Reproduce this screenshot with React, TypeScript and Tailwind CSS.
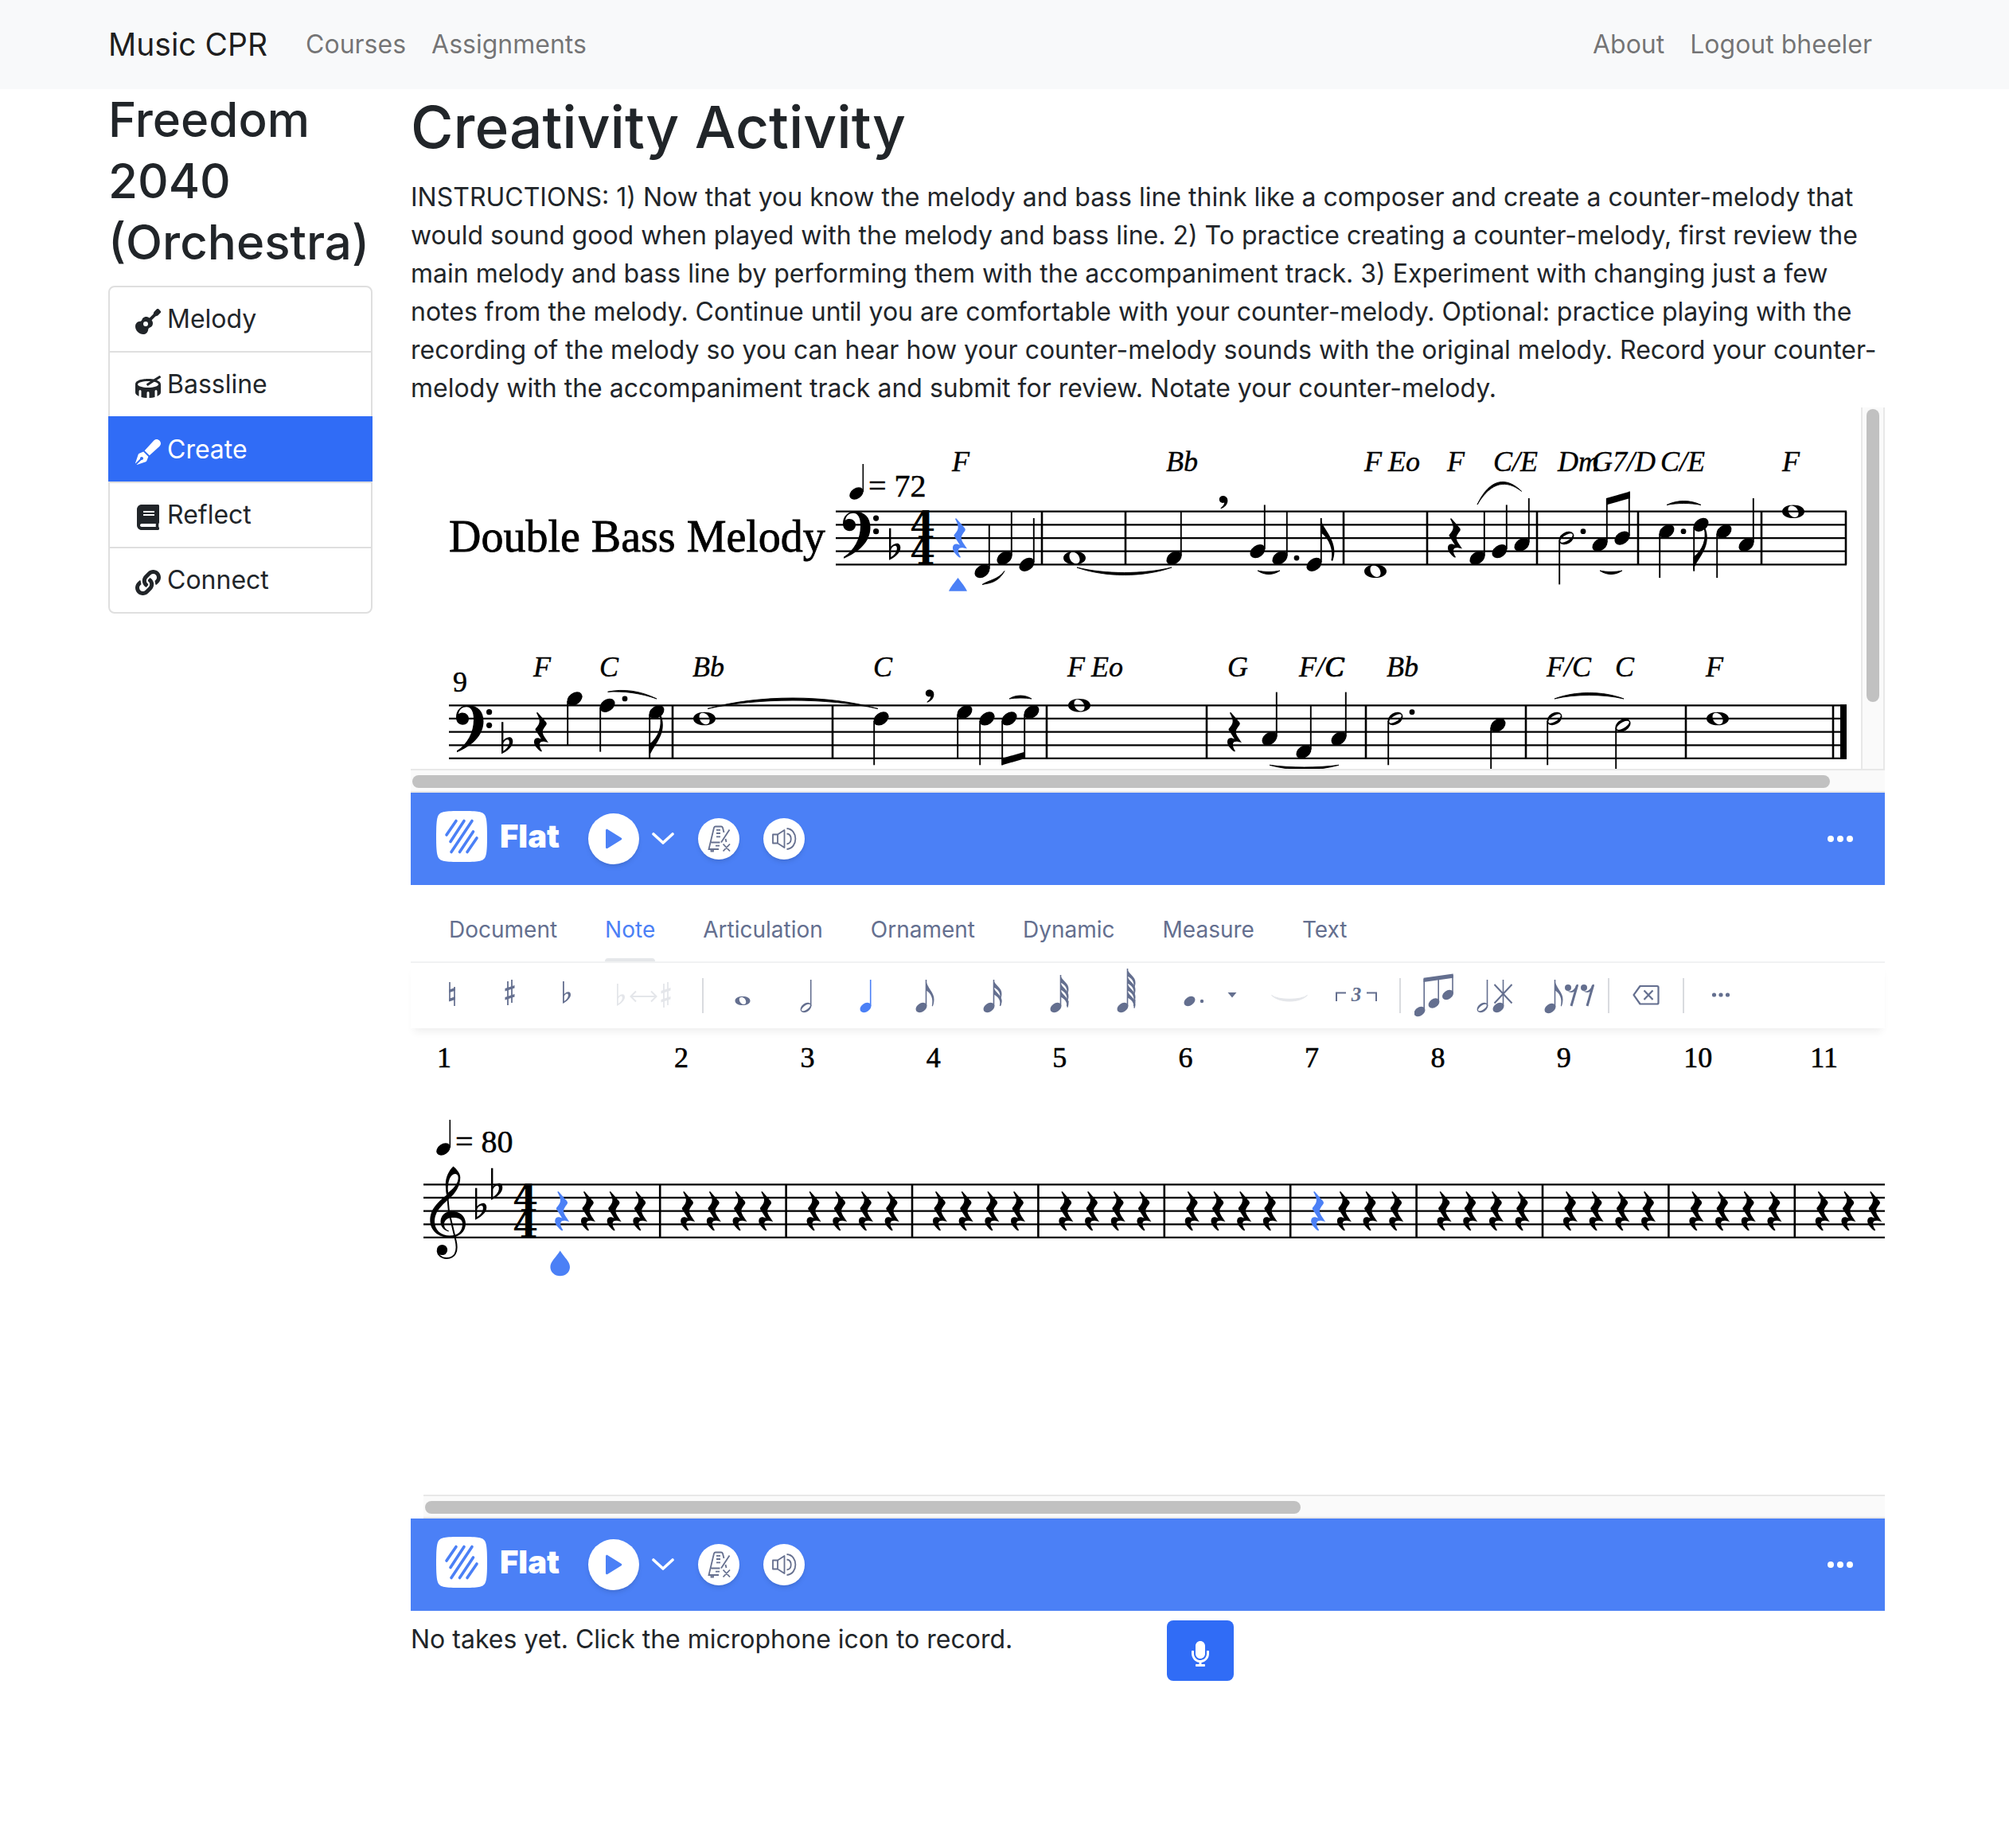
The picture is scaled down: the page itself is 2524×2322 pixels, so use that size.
import React from "react";
import { FaBook, FaDrum, FaGuitar, FaLink, FaMicrophone, FaPenFancy } from "react-icons/fa";

const INK = "#000000";
const BLUE = "#4b80f6";
const SPACE = 50 / 3;
const HALF = SPACE / 2;

/* ---------- notation primitives ---------- */

type At = { x: number; y: number };

function Staff({ x1, x2, top }: { x1: number; x2: number; top: number }) {
  return (
    <g stroke={INK} strokeWidth={2.3}>
      {[0, 1, 2, 3, 4].map((i) => (
        <line key={i} x1={x1} x2={x2} y1={top + i * SPACE} y2={top + i * SPACE} />
      ))}
    </g>
  );
}

function Bars({ xs, top }: { xs: number[]; top: number }) {
  return (
    <g stroke={INK} strokeWidth={2.6}>
      {xs.map((x) => (
        <line key={x} x1={x} x2={x} y1={top} y2={top + 4 * SPACE} />
      ))}
    </g>
  );
}

const BASS =
  "M1 57C14 49 22 34 22 18C22 8 19 2 13 2C8 2 4 5 3 11C5 9.5 7 9.3 8 9.3C12.5 9.3 16 12.5 16 17C16 21.5 12.5 24.5 8.5 24.5C3.5 24.5 0 21 0 15C0 6 6 0 15 0C27 0 34.5 7 34.5 20C34.5 38 20 51 1 59Z";

function BassClef({ x, y }: At) {
  return (
    <g transform={`translate(${x} ${y})`} fill={INK}>
      <path d={BASS} />
      <circle cx={41.6} cy={8.4} r={3.6} />
      <circle cx={41.6} cy={25} r={3.6} />
    </g>
  );
}

function TrebleClef({ x, y }: At) {
  return (
    <g transform={`translate(${x} ${y})`} fill={INK}>
      <path
        fillRule="evenodd"
        d="M29.5 0C24 5 19.5 14 19.8 24C20 28 20.3 32 21 36C9 46 0.3 54 0.3 68C0.3 80 10 89.5 25 89.5C37 89.5 45 82 45 72C45 63 38 56.5 27.5 56.5C19 56.5 13.5 62 13.5 70C13.5 76 18 80.5 23.5 82L24 81C21 80 18 77.5 18 73C18 67 23 64.5 29 64.5C35 64.5 41 66 41 72C41 81 36 87 25 87C14 87 6 80 6 69C6 58 14 49.5 24 41C32 34 38.3 25 38.3 14C38.3 8 33 3 29.5 0ZM23 33C22 25 23.5 10 32 9.5C36.5 9.5 36.5 16 34 21C31.5 26 27 30 23 33Z"
      />
      <path
        d="M21.5 30L24 57L32.5 93C36 108 31 115.5 21 115.5C14 115.5 10 111 9.5 106"
        fill="none"
        stroke={INK}
        strokeWidth={2}
      />
      <circle cx={15.5} cy={105} r={6.6} />
    </g>
  );
}

const FLAT =
  "M0 -29h2.4L2.4 -6C5 -9 8 -10 10 -10C13 -10 14.3 -7.5 14.3 -4.5C14.3 2 7 8 0 11ZM2.4 -2.5C4 -6 6 -7 7.5 -7C9.6 -7 10.2 -5 9.7 -2C9 2 6 5 2.3 7.4Z";

function Flat({ x, y }: At) {
  return <path transform={`translate(${x} ${y})`} fillRule="evenodd" d={FLAT} fill={INK} />;
}

function Time({ x, top }: { x: number; top: number }) {
  return (
    <text
      fill={INK}
      fontFamily="'DejaVu Serif', serif"
      fontWeight={700}
      fontSize={46}
      textAnchor="middle"
    >
      <tspan x={x} y={top + 2 * SPACE}>
        4
      </tspan>
      <tspan x={x} y={top + 4 * SPACE}>
        4
      </tspan>
    </text>
  );
}

function Rest({ x, top, color = INK }: { x: number; top: number; color?: string }) {
  return (
    <path
      transform={`translate(${x} ${top + 2 * SPACE})`}
      fill={color}
      d="M-6 -24C-5.5 -25 -4.5 -25 -4 -24L6 -12.5C7 -11 7 -10 6 -8.5C1 -2 0.5 0 4 6L9 13.5C4 12 -1 11 -2 15C-2.5 18 -1 21 1 24C0 25 -1 24.5 -2 23.5C-6 20 -9.5 16 -9 11.5C-8.5 7 -4 6.5 0 9L-7 -2C-7.8 -3.2 -7.5 -4 -6.5 -5C-1 -11 -1 -15 -6 -24Z"
    />
  );
}

function Whole({ x, y }: At) {
  return (
    <path
      transform={`translate(${x} ${y})`}
      fillRule="evenodd"
      fill={INK}
      d="M-14 0C-14 -5 -8 -8.3 0 -8.3C8 -8.3 14 -5 14 0C14 5 8 8.3 0 8.3C-8 8.3 -14 5 -14 0ZM-6.5 -2.5C-6.5 3 -2 7.2 2 7.2C5 7.2 6.8 5 6.5 1.5C6 -3.5 2 -7.2 -2 -7.2C-5 -7.2 -6.5 -5.5 -6.5 -2.5Z"
    />
  );
}

type Stem = "up" | "down";

interface NoteSpec {
  x: number;
  s: number;
  stem?: Stem;
  kind?: "quarter" | "half" | "eighth" | "whole";
  dot?: number;
  len?: number;
}

function Note({ x, s, stem = "up", kind = "quarter", dot, len = 7, top }: NoteSpec & { top: number }) {
  const y = top + s * HALF;
  const dotY = s % 2 === 0 ? y - HALF : y;
  if (kind === "whole") return <Whole x={x} y={y} />;
  const sx = stem === "up" ? x + 8.8 : x - 8.8;
  const end = stem === "up" ? y - len * HALF : y + len * HALF;
  return (
    <g fill={INK}>
      {kind === "half" ? (
        <g transform={`translate(${x} ${y}) rotate(-32)`}>
          <path
            fillRule="evenodd"
            d="M-10.3 0A10.3 7.2 0 1 1 10.3 0A10.3 7.2 0 1 1 -10.3 0ZM-8.8 0.6A8.8 3.6 0 1 0 8.8 -0.6A8.8 3.6 0 1 0 -8.8 0.6Z"
          />
        </g>
      ) : (
        <ellipse cx={x} cy={y} rx={10.5} ry={7.4} transform={`rotate(-36 ${x} ${y})`} />
      )}
      <line x1={sx} x2={sx} y1={y + (stem === "up" ? -3 : 3)} y2={end} stroke={INK} strokeWidth={1.9} />
      {kind === "eighth" && (
        <path
          transform={`translate(${sx - 0.9} ${end}) scale(1 ${stem === "up" ? 1 : -1})`}
          d="M0 0C2 12 17.5 24 17.5 42C17.5 47 16.5 51 15.2 54L13.5 53C16.5 42 12 26 0 18Z"
        />
      )}
      {dot !== undefined && <circle cx={dot} cy={dotY} r={3.4} />}
    </g>
  );
}

function Slur({ a, b, apex }: { a: [number, number]; b: [number, number]; apex: number }) {
  const mid = (a[1] + b[1]) / 2;
  const dir = apex > mid ? 1 : -1;
  const cOut = mid + (apex - mid) * 1.33;
  const cIn = cOut - dir * 4;
  const q = (b[0] - a[0]) * 0.3;
  return (
    <path
      fill={INK}
      stroke={INK}
      strokeWidth={0.9}
      d={`M${a[0]} ${a[1]}C${a[0] + q} ${cOut} ${b[0] - q} ${cOut} ${b[0]} ${b[1]}C${b[0] - q} ${cIn} ${a[0] + q} ${cIn} ${a[0]} ${a[1]}Z`}
    />
  );
}

function Breath({ x, y }: At) {
  return (
    <path
      transform={`translate(${x} ${y})`}
      fill={INK}
      d="M-5.2 -3.5C-5.2 -6.4 -3 -8 -0.5 -8C3 -8 5.4 -5.6 5.4 -2C5.4 3 1.5 6.6 -3 8.3L-3.6 7.4C-1 5.6 1 3.4 1.2 0.6C-2.5 1.8 -5.2 -0.5 -5.2 -3.5Z"
    />
  );
}

function Chords({ list, y }: { list: [number, string][]; y: number }) {
  return (
    <g
      fill={INK}
      stroke={INK}
      strokeWidth={0.4}
      fontFamily="'Liberation Serif', serif"
      fontStyle="italic"
      fontSize={36}
    >
      {list.map(([x, t]) => (
        <text key={`${x}${t}`} x={x} y={y}>
          {t}
        </text>
      ))}
    </g>
  );
}

function Tempo({ x, y, bpm }: At & { bpm: number }) {
  return (
    <g fill={INK}>
      <ellipse cx={x} cy={y} rx={9.6} ry={6.6} transform={`rotate(-34 ${x} ${y})`} />
      <line x1={x + 8.3} x2={x + 8.3} y1={y - 2} y2={y - 37} stroke={INK} strokeWidth={1.6} />
      <text
        x={x + 15}
        y={y + 4}
        fontFamily="'Liberation Serif', serif"
        fontSize={40}
        stroke={INK}
        strokeWidth={0.5}
      >
        = {bpm}
      </text>
    </g>
  );
}

/* ---------- scores ---------- */

const T1 = 642.7;
const T2 = 886.3;
const T3 = 1488.3;

const LINE_ONE: NoteSpec[] = [
  { x: 1234, s: 9 },
  { x: 1262, s: 7 },
  { x: 1290, s: 8 },
  { x: 1350, s: 7, kind: "whole" },
  { x: 1475, s: 7 },
  { x: 1580, s: 6 },
  { x: 1608, s: 7, dot: 1629 },
  { x: 1651, s: 8, kind: "eighth" },
  { x: 1728, s: 9, kind: "whole" },
  { x: 1856, s: 7 },
  { x: 1884, s: 6 },
  { x: 1912, s: 5 },
  { x: 1968, s: 4, kind: "half", stem: "down", dot: 1989 },
  { x: 2010, s: 5 },
  { x: 2038, s: 4 },
  { x: 2094, s: 3, stem: "down", dot: 2115 },
  { x: 2137, s: 2, stem: "down", kind: "eighth" },
  { x: 2166, s: 3, stem: "down" },
  { x: 2194, s: 5 },
  { x: 2253, s: 0, kind: "whole" },
];

const LINE_TWO: NoteSpec[] = [
  { x: 722, s: -1, stem: "down" },
  { x: 763, s: 0, stem: "down", dot: 785 },
  { x: 825, s: 1, stem: "down", kind: "eighth" },
  { x: 885, s: 2, kind: "whole" },
  { x: 1107, s: 2, stem: "down" },
  { x: 1212, s: 1, stem: "down" },
  { x: 1240, s: 2, stem: "down" },
  { x: 1268, s: 2, stem: "down" },
  { x: 1296, s: 1, stem: "down" },
  { x: 1356, s: 0, kind: "whole" },
  { x: 1595, s: 5 },
  { x: 1638, s: 7 },
  { x: 1682, s: 5 },
  { x: 1753, s: 2, kind: "half", stem: "down", dot: 1774 },
  { x: 1882, s: 3, stem: "down" },
  { x: 1953, s: 2, kind: "half", stem: "down" },
  { x: 2039, s: 3, kind: "half", stem: "down" },
  { x: 2158, s: 2, kind: "whole" },
];

function MelodyScore() {
  return (
    <svg
      viewBox="516 512 1822 454"
      preserveAspectRatio="xMinYMin slice"
      className="block h-[454px] w-full"
      role="img"
      aria-label="Double Bass Melody score"
    >
      <text
        x={564}
        y={693}
        fontFamily="'Liberation Serif', serif"
        fontSize={56}
        fill={INK}
        stroke={INK}
        strokeWidth={0.8}
      >
        Double Bass Melody
      </text>
      <Tempo x={1076} y={620} bpm={72} />
      <Chords
        y={592}
        list={[
          [1196, "F"],
          [1465, "Bb"],
          [1714, "F"],
          [1744, "Eo"],
          [1818, "F"],
          [1876, "C/E"],
          [1957, "Dm"],
          [2000, "G7/D"],
          [2086, "C/E"],
          [2239, "F"],
        ]}
      />
      <Staff x1={1050} x2={2320} top={T1} />
      <Bars xs={[1309, 1414, 1688, 1793, 1931, 2058, 2213, 2319]} top={T1} />
      <BassClef x={1059} y={T1} />
      <Flat x={1117} y={T1 + 6 * HALF} />
      <Time x={1159} top={T1} />
      <Rest x={1206} top={T1} color={BLUE} />
      <path d="M1203.5 726C1208 732 1213 738 1215 742.7H1192C1194 738 1199 732 1203.5 726Z" fill={BLUE} />
      <Rest x={1828} top={T1} />
      {LINE_ONE.map((n) => (
        <Note key={n.x} {...n} top={T1} />
      ))}
      <path d="M2018 626L2048 617.5V626L2018 634.5Z" fill={INK} />
      <Breath x={1537} y={631} />
      <Slur a={[1234, 734.5]} b={[1262, 717.5]} apex={731} />
      <Slur a={[1353, 713]} b={[1472, 713]} apex={722.5} />
      <Slur a={[1580, 717]} b={[1608, 717]} apex={721.5} />
      <path
        d="M1856 634C1872 600 1893 599 1911.6 617.3C1893 603 1874 604 1856 634Z"
        fill={INK}
        stroke={INK}
        strokeWidth={0.9}
      />
      <Slur a={[2010, 717]} b={[2038, 717]} apex={721.5} />
      <Slur a={[2094, 634.5]} b={[2137, 634.5]} apex={629.5} />

      <text x={569} y={869} fontFamily="'Liberation Serif', serif" fontSize={36} fill={INK} stroke={INK} strokeWidth={0.5}>
        9
      </text>
      <Chords
        y={850}
        list={[
          [670, "F"],
          [753, "C"],
          [870, "Bb"],
          [1097, "C"],
          [1341, "F"],
          [1371, "Eo"],
          [1542, "G"],
          [1632, "F/C"],
          [1665, "C"],
          [1742, "Bb"],
          [1943, "F/C"],
          [2029, "C"],
          [2143, "F"],
        ]}
      />
      <Staff x1={564} x2={2320} top={T2} />
      <Bars xs={[845, 1046, 1315, 1516, 1716, 1917, 2118, 2303]} top={T2} />
      <rect x={2312} y={T2 - 1} width={8} height={4 * SPACE + 2} fill={INK} />
      <BassClef x={573} y={T2} />
      <Flat x={630} y={T2 + 6 * HALF} />
      <Rest x={680} top={T2} />
      <Rest x={1551} top={T2} />
      {LINE_TWO.map((n) => (
        <Note key={n.x} {...n} top={T2} />
      ))}
      <path d="M1258.5 953L1288 944.5V953L1258.5 961.5Z" fill={INK} />
      <Breath x={1168} y={874.5} />
      <path
        d="M763.6 869.3C783 865 805 868 825 878C805 871 783 868 763.6 869.3Z"
        fill={INK}
        stroke={INK}
        strokeWidth={0.9}
      />
      <Slur a={[889, 890.5]} b={[1103, 890.5]} apex={877} />
      <Slur a={[1268, 878]} b={[1296, 878]} apex={874} />
      <Slur a={[1595, 961.3]} b={[1682, 961.3]} apex={967} />
      <Slur a={[1953, 878]} b={[2040, 878]} apex={870.5} />
    </svg>
  );
}

function EditorScore() {
  const bars = Array.from({ length: 10 }, (_, i) => 829.2 + i * 158.4);
  const starts = [671.3, ...bars];
  return (
    <svg
      viewBox="532 1292 1836 586"
      preserveAspectRatio="xMinYMin slice"
      className="block h-[586px] w-full"
      role="img"
      aria-label="Counter-melody score"
    >
      <g
        fontFamily="'Liberation Serif', serif"
        fontSize={36}
        fill={INK}
        stroke={INK}
        strokeWidth={0.6}
        textAnchor="middle"
      >
        {starts.map((_, i) => (
          <text key={i} x={i === 0 ? 558 : 856 + (i - 1) * 158.4 + (i > 8 ? 10 : 0)} y={1341}>
            {i + 1}
          </text>
        ))}
      </g>
      <Tempo x={557} y={1444} bpm={80} />
      <Staff x1={532} x2={2400} top={T3} />
      <Bars xs={bars} top={T3} />
      <TrebleClef x={540} y={1465.5} />
      <Flat x={597} y={T3 + 4 * HALF} />
      <Flat x={617} y={T3 + HALF} />
      <Time x={660} top={T3} />
      {starts.map((x, m) =>
        [0, 1, 2, 3].map((b) => (
          <Rest
            key={`${m}-${b}`}
            x={x + 35 + b * 32.7}
            top={T3}
            color={b === 0 && (m === 0 || m === 6) ? BLUE : INK}
          />
        ))
      )}
      <path
        d="M703.7 1571.5C709 1580 716 1585 716 1592C716 1598.5 710.5 1603.3 703.7 1603.3C697 1603.3 691.4 1598.5 691.4 1592C691.4 1585 698.500 1580 703.7 1571.5Z"
        fill={BLUE}
      />
    </svg>
  );
}

/* ---------- player bar ---------- */

function PlayerBar() {
  return (
    <div className="flex h-[116px] items-center bg-[#4b80f6] pr-10 pl-8 text-white">
      <a href="#flat" className="flex items-center gap-4 pb-1.5">
        <svg width={64} height={64} viewBox="0 0 64 64" aria-hidden="true">
          <path
            d="M32 0C54 0 58 1 61 5C63 8 64 14 64 32C64 50 63 56 61 59C58 63 54 64 32 64C10 64 6 63 3 59C1 56 0 50 0 32C0 14 1 8 3 5C6 1 10 0 32 0Z"
            fill="#fff"
          />
          <path
            d="M25 12.5L13 30M35 12.5L18 38.5M45 12.5L19 51.5M46.5 26L29.5 51.5M51 34L39 51.5"
            stroke={BLUE}
            strokeWidth={3.6}
            strokeLinecap="round"
          />
        </svg>
        <span className="font-['Inter',sans-serif] text-[40px] leading-none font-black">Flat</span>
      </a>
      <button
        type="button"
        aria-label="Play"
        className="ml-9 grid size-16 place-items-center rounded-full bg-white shadow-md"
      >
        <svg width={64} height={64} viewBox="0 0 64 64" aria-hidden="true">
          <path d="M22 21.5C22 19.8 23.4 19.3 24.6 20.2L41.5 30.8C42.5 31.5 42.5 32.5 41.5 33.2L24.6 43.8C23.4 44.7 22 44.2 22 42.5Z" fill={BLUE} />
        </svg>
      </button>
      <button type="button" aria-label="Playback options" className="ml-4">
        <svg width={28} height={16} viewBox="0 0 28 16" fill="none" aria-hidden="true">
          <path d="M2 2L14 13L26 2" stroke="#fff" strokeWidth={3.6} strokeLinecap="round" strokeLinejoin="round" />
        </svg>
      </button>
      <button
        type="button"
        aria-label="Metronome"
        className="ml-[30px] size-[52px] rounded-full bg-white shadow-md"
      >
        <svg width={52} height={52} viewBox="0 0 52 52" fill="none" stroke="#66708f" strokeWidth={1.8} aria-hidden="true">
          <path d="M26 39H13.5L20 12Q20.5 10.5 22 10.5H29Q30.5 10.5 31 12L32.5 18M34.5 26L35.5 30M16.5 30.5H27.5M39.5 14.5L29 30.5M23 14.8H28M23 19H28M23 23.3H28M22 34.7H27M16.5 39V41.5H19V39M31.5 32.5L40 41.5M40 32.5L31.5 41.5" />
        </svg>
      </button>
      <button
        type="button"
        aria-label="Volume"
        className="ml-[30px] size-[52px] rounded-full bg-white shadow-md"
      >
        <svg width={52} height={52} viewBox="0 0 52 52" fill="none" stroke="#66708f" strokeWidth={1.8} aria-hidden="true">
          <path
            strokeLinejoin="round"
            d="M12 20.5H18V31.5H12ZM18 20.5L26.5 15V37L18 31.5M29.5 19.5C36.5 20.5 36.5 31.5 29.5 32.5M29.5 13C44 14 44 38 29.5 39"
          />
        </svg>
      </button>
      <button type="button" aria-label="More" className="ml-auto">
        <svg width={32} height={10} viewBox="0 0 32 10" fill="#fff" aria-hidden="true">
          <circle cx={4} cy={5} r={4} />
          <circle cx={16} cy={5} r={4} />
          <circle cx={28} cy={5} r={4} />
        </svg>
      </button>
    </div>
  );
}

/* ---------- toolbar icons, drawn on an 82px tall row ---------- */

function Glyph({ w, children }: { w: number; children: React.ReactNode }) {
  return (
    <svg width={w} height={82} viewBox={`0 0 ${w} 82`} fill="currentColor" aria-hidden="true">
      {children}
    </svg>
  );
}

function SmallHead({ x, y, hollow = false }: At & { hollow?: boolean }) {
  return (
    <g transform={`translate(${x} ${y}) rotate(-36)`}>
      {hollow ? (
        <path
          fillRule="evenodd"
          d="M-7.6 0A7.6 5.2 0 1 1 7.6 0A7.6 5.2 0 1 1 -7.6 0ZM-6.4 0.4A6.4 2.6 0 1 0 6.4 -0.4A6.4 2.6 0 1 0 -6.4 0.4Z"
        />
      ) : (
        <ellipse rx={7.6} ry={5.4} />
      )}
    </g>
  );
}

function SmallStem({ x, y1, y2 }: { x: number; y1: number; y2: number }) {
  return <line x1={x} x2={x} y1={y1} y2={y2} stroke="currentColor" strokeWidth={1.6} />;
}

function SmallSharp() {
  return (
    <g>
      <path d="M4 23V53M9 21V50" stroke="currentColor" strokeWidth={1.8} fill="none" />
      <path d="M0.5 32L12.5 28V31.5L0.5 35.5ZM0.5 43L12.5 39V42.5L0.5 46.5Z" />
    </g>
  );
}

function SmallFlat() {
  return (
    <path
      fillRule="evenodd"
      d="M0 23H1.8V39C4 37 5.6 36.3 7 36.3C9 36.3 10 38 10 40C10 44 5 48.5 0 51ZM1.8 41.5C3 39.3 4.3 38.4 5.3 38.4C6.8 38.4 7 39.8 6.8 41.4C6.3 44 4.2 46.3 1.8 48Z"
    />
  );
}

const EIGHTH_FLAG = "M13 21C14.5 31 24 37 23.5 46C23.4 50 22.6 52.5 21.8 54.5L20.8 54C22.8 45 20 38 13 34Z";

function FlaggedNote({ top, flags }: { top: number; flags: number }) {
  return (
    <Glyph w={26}>
      <SmallHead x={7.5} y={56} />
      <SmallStem x={13.5} y1={54} y2={top} />
      {flags === 1 ? (
        <path d={EIGHTH_FLAG} />
      ) : (
        <>
          {Array.from({ length: flags }, (_, i) => (
            <path
              key={i}
              transform={`translate(0 ${top + i * 9})`}
              d="M13 0C15 7 24 10 23.5 18C23.4 20.5 22.9 22 22.4 23L21.4 22.6C22.2 16 18 11.5 13 9.5Z"
            />
          ))}
          <path
            d={`M22.6 ${top + 7 + flags * 9}C23.2 ${top + 20 + flags * 4} 23 48 21.5 54`}
            fill="none"
            stroke="currentColor"
            strokeWidth={1.4}
          />
        </>
      )}
    </Glyph>
  );
}

function SmallEighthRest({ x }: { x: number }) {
  return (
    <g transform={`translate(${x} 0)`}>
      <circle cx={4} cy={31} r={4} />
      <path d="M15.5 28L8 54" stroke="currentColor" strokeWidth={3} fill="none" />
      <path d="M2 34C7 38 12 34 15 27H17L15 33C11 38 6 38 2 34Z" />
    </g>
  );
}

type Tool = { label: string; box: string; icon: React.ReactNode } | "divider";

const TOOLS: Tool[] = [
  {
    label: "Natural",
    box: "w-[72px]",
    icon: (
      <Glyph w={8}>
        <path d="M1 24V48M7 30V54" stroke="currentColor" strokeWidth={1.7} />
        <path d="M0.2 33.5L7.8 31V34.7L0.2 37.2ZM0.2 44.8L7.8 42.3V46L0.2 48.5Z" />
      </Glyph>
    ),
  },
  {
    label: "Sharp",
    box: "w-[72px]",
    icon: (
      <Glyph w={13}>
        <SmallSharp />
      </Glyph>
    ),
  },
  {
    label: "Flat",
    box: "w-[72px]",
    icon: (
      <Glyph w={11}>
        <SmallFlat />
      </Glyph>
    ),
  },
  {
    label: "Enharmonic",
    box: "w-[122px] text-[#e4e6ea]",
    icon: (
      <Glyph w={68}>
        <g transform="translate(0 3)">
          <SmallFlat />
        </g>
        <path d="M18 42H49M24 35.5L17.5 42L24 48.5M43 35.5L49.5 42L43 48.5" fill="none" stroke="currentColor" strokeWidth={2} />
        <g transform="translate(55 3)">
          <SmallSharp />
        </g>
      </Glyph>
    ),
  },
  "divider",
  {
    label: "Whole note",
    box: "w-[74px]",
    icon: (
      <Glyph w={20}>
        <path
          fillRule="evenodd"
          d="M0.5 47.5C0.5 44 4.5 42 10 42C15.5 42 19.5 44 19.5 47.5C19.5 51 15.5 53 10 53C4.5 53 0.5 51 0.5 47.5ZM5.8 45.8C5.8 49 8.5 52 11.3 52C13.3 52 14.5 50.8 14.2 48.5C13.8 45.3 11.3 43 8.7 43C6.8 43 5.8 44 5.8 45.8Z"
        />
      </Glyph>
    ),
  },
  {
    label: "Half note",
    box: "w-[84px]",
    icon: (
      <Glyph w={15}>
        <SmallHead x={7.5} y={56} hollow />
        <SmallStem x={13.7} y1={54} y2={21} />
      </Glyph>
    ),
  },
  {
    label: "Quarter note",
    box: "w-[66px] text-[#4b80f6]",
    icon: (
      <Glyph w={15}>
        <SmallHead x={7.5} y={56} />
        <SmallStem x={13.7} y1={54} y2={21} />
      </Glyph>
    ),
  },
  { label: "Eighth note", box: "w-[86px]", icon: <FlaggedNote top={21} flags={1} /> },
  { label: "16th note", box: "w-[84px]", icon: <FlaggedNote top={21} flags={2} /> },
  { label: "32nd note", box: "w-[84px]", icon: <FlaggedNote top={15} flags={3} /> },
  { label: "64th note", box: "w-[84px]", icon: <FlaggedNote top={7} flags={4} /> },
  {
    label: "Dotted note",
    box: "w-[84px]",
    icon: (
      <Glyph w={26}>
        <SmallHead x={7.5} y={48} />
        <circle cx={23} cy={48} r={2.2} />
      </Glyph>
    ),
  },
  {
    label: "Dot options",
    box: "w-[12px]",
    icon: (
      <Glyph w={12}>
        <path d="M0.5 37H11.5L6 43.5Z" />
      </Glyph>
    ),
  },
  {
    label: "Tie",
    box: "ml-6 w-[84px] text-[#e4e6ea]",
    icon: (
      <Glyph w={46}>
        <path d="M0.5 40.5C10 50.5 36 50.5 45.5 40.5C38 47 8 47 0.5 40.5Z" stroke="currentColor" />
      </Glyph>
    ),
  },
  {
    label: "Triplet",
    box: "w-[84px]",
    icon: (
      <Glyph w={52}>
        <path d="M1 48V37.5H13M39 37.5H51V48" fill="none" stroke="currentColor" strokeWidth={2} />
        <text
          x={26}
          y={48}
          textAnchor="middle"
          fontFamily="'Liberation Serif', serif"
          fontStyle="italic"
          fontWeight={700}
          fontSize={25}
        >
          3
        </text>
      </Glyph>
    ),
  },
  "divider",
  {
    label: "Beam",
    box: "w-[60px]",
    icon: (
      <Glyph w={50}>
        <SmallHead x={6.5} y={61} />
        <SmallHead x={24.5} y={50.5} />
        <SmallHead x={42} y={40} />
        <SmallStem x={12.2} y1={59} y2={20} />
        <SmallStem x={30.2} y1={48} y2={18} />
        <SmallStem x={48} y1={38} y2={15} />
        <path d="M11.5 18.7L48.7 13.5V18.7L11.5 24Z" />
      </Glyph>
    ),
  },
  {
    label: "Replace duration",
    box: "ml-1 w-[84px]",
    icon: (
      <Glyph w={46}>
        <SmallHead x={7.5} y={56} hollow />
        <SmallStem x={13.5} y1={54} y2={21} />
        <SmallHead x={27.5} y={56} />
        <SmallStem x={33.5} y1={54} y2={21} />
        <path d="M22.5 27L44.5 50.5M44.5 27L22.5 50.5" stroke="currentColor" strokeWidth={2} />
      </Glyph>
    ),
  },
  {
    label: "Fill with rests",
    box: "ml-4 w-[72px]",
    icon: (
      <Glyph w={64}>
        <SmallHead x={7.5} y={57} />
        <SmallStem x={13.5} y1={55} y2={21} />
        <path d={EIGHTH_FLAG} />
        <SmallEighthRest x={26} />
        <SmallEighthRest x={46} />
      </Glyph>
    ),
  },
  "divider",
  {
    label: "Delete",
    box: "w-[68px]",
    icon: (
      <Glyph w={34}>
        <path
          d="M9.5 29H31Q32.5 29 32.5 30.5V50Q32.5 51.5 31 51.5H9.5L1.5 40.2ZM14.5 34.5L25.5 46M25.5 34.5L14.5 46"
          fill="none"
          stroke="currentColor"
          strokeWidth={2.2}
          strokeLinejoin="round"
        />
      </Glyph>
    ),
  },
  "divider",
  {
    label: "More tools",
    box: "w-[68px]",
    icon: (
      <Glyph w={24}>
        <circle cx={3.5} cy={40} r={2.6} />
        <circle cx={12} cy={40} r={2.6} />
        <circle cx={20.5} cy={40} r={2.6} />
      </Glyph>
    ),
  },
];

const TABS = ["Document", "Note", "Articulation", "Ornament", "Dynamic", "Measure", "Text"];

const MENU = [
  { name: "Melody", Icon: FaGuitar },
  { name: "Bassline", Icon: FaDrum },
  { name: "Create", Icon: FaPenFancy },
  { name: "Reflect", Icon: FaBook },
  { name: "Connect", Icon: FaLink },
];

export default function App() {
  return (
    <div className="min-h-screen bg-white font-['Inter',sans-serif] text-[32px] leading-[48px] text-[#212529]">
      <header className="bg-[#f8f9fa] pr-5">
        <nav className="mx-auto flex h-28 max-w-[2280px] items-center px-6 text-black/55">
          <a href="#home" className="mr-8 text-[39px] text-black/90">
            Music CPR
          </a>
          <a href="#courses" className="px-4">
            Courses
          </a>
          <a href="#assignments" className="px-4">
            Assignments
          </a>
          <a href="#about" className="ml-auto px-4">
            About
          </a>
          <a href="#logout" className="px-4">
            Logout bheeler
          </a>
        </nav>
      </header>

      <div className="pr-5">
        <div className="mx-auto flex max-w-[2280px] gap-12 px-6">
          <aside className="w-[332px] shrink-0">
            <h2 className="mb-4 text-[60px] leading-[77px] font-medium">
              Freedom
              <br />
              2040
              <br />
              (Orchestra)
            </h2>
            <ul className="rounded-lg border-2 border-[#dfdfdf]">
              {MENU.map(({ name, Icon }, i) => (
                <li key={name} className={i > 0 ? "border-t-2 border-[#dfdfdf]" : ""}>
                  <a
                    href={`#${name.toLowerCase()}`}
                    aria-current={name === "Create" ? "page" : undefined}
                    className={
                      name === "Create"
                        ? "-mx-0.5 -mt-0.5 flex items-center gap-2 bg-[#306cf6] px-[34px] pt-[18px] pb-4 text-white"
                        : "flex items-center gap-2 px-8 py-4"
                    }
                  >
                    <Icon className="mt-1.5 size-8" aria-hidden="true" />
                    {name}
                  </a>
                </li>
              ))}
            </ul>
          </aside>

          <main className="min-w-0 flex-1">
            <h1 className="mb-4 text-[73px] leading-24 font-medium">Creativity Activity</h1>
            <p>
              INSTRUCTIONS: 1) Now that you know the melody and bass line think like a composer and create a
              counter-melody that would sound good when played with the melody and bass line. 2) To practice
              creating a counter-melody, first review the main melody and bass line by performing them with the
              accompaniment track. 3) Experiment with changing just a few notes from the melody. Continue until you
              are comfortable with your counter-melody. Optional: practice playing with the recording of the melody
              so you can hear how your counter-melody sounds with the original melody. Record your counter-melody
              with the accompaniment track and submit for review. Notate your counter-melody.
            </p>

            <section aria-label="Melody player">
              <div className="flex">
                <div className="min-w-0 flex-1 overflow-hidden">
                  <MelodyScore />
                </div>
                <div className="w-[30px] border-x-2 border-[#e8e8e8] bg-[#fafafa] px-[5px] pt-0.5">
                  <div className="h-[368px] rounded-full bg-[#c1c1c1]" />
                </div>
              </div>
              <div className="h-[30px] border-y-2 border-[#e8e8e8] bg-[#fafafa] pt-1.5 pr-[69px] pl-0.5">
                <div className="h-4 rounded-full bg-[#c1c1c1]" />
              </div>
              <PlayerBar />
            </section>

            <section aria-label="Counter-melody editor">
              <div className="flex h-[98px] gap-[60px] border-b-2 border-[#f1f2f3] pl-12 text-[28px] text-[#646f8f]" role="tablist">
                {TABS.map((t) => (
                  <button
                    key={t}
                    type="button"
                    role="tab"
                    aria-selected={t === "Note"}
                    className={
                      t === "Note"
                        ? "flex flex-col justify-between pt-8 text-[#4b80f6] after:h-1 after:w-full after:rounded-t-sm after:bg-[#e5e7ea]"
                        : "flex flex-col pt-8"
                    }
                  >
                    {t}
                  </button>
                ))}
              </div>
              <div className="relative z-10 flex h-[82px] items-center bg-white pl-4 text-[#646f8f] shadow-[0_8px_10px_-4px_rgba(0,0,0,0.07)]">
                {TOOLS.map((tool, i) =>
                  tool === "divider" ? (
                    <span key={i} className="mx-3 h-11 w-0.5 bg-[#d9dbdf]" />
                  ) : (
                    <button
                      key={i}
                      type="button"
                      aria-label={tool.label}
                      className={`flex shrink-0 justify-center ${tool.box}`}
                    >
                      {tool.icon}
                    </button>
                  )
                )}
              </div>
              <div className="ml-4">
                <EditorScore />
                <div className="h-[30px] border-y-2 border-[#e8e8e8] bg-[#fafafa] pt-1.5 pl-0.5">
                  <div className="h-4 w-[60%] rounded-full bg-[#c1c1c1]" />
                </div>
              </div>
              <PlayerBar />
            </section>

            <section className="grid grid-cols-2 gap-12 pt-3" aria-label="Recording">
              <p>No takes yet. Click the microphone icon to record.</p>
              <div>
                <button
                  type="button"
                  aria-label="Record"
                  className="flex h-[76px] w-[84px] items-center justify-center rounded-lg bg-[#306cf6] pt-2 text-white"
                >
                  <FaMicrophone className="size-8" aria-hidden="true" />
                </button>
              </div>
            </section>
          </main>
        </div>
      </div>
    </div>
  );
}
